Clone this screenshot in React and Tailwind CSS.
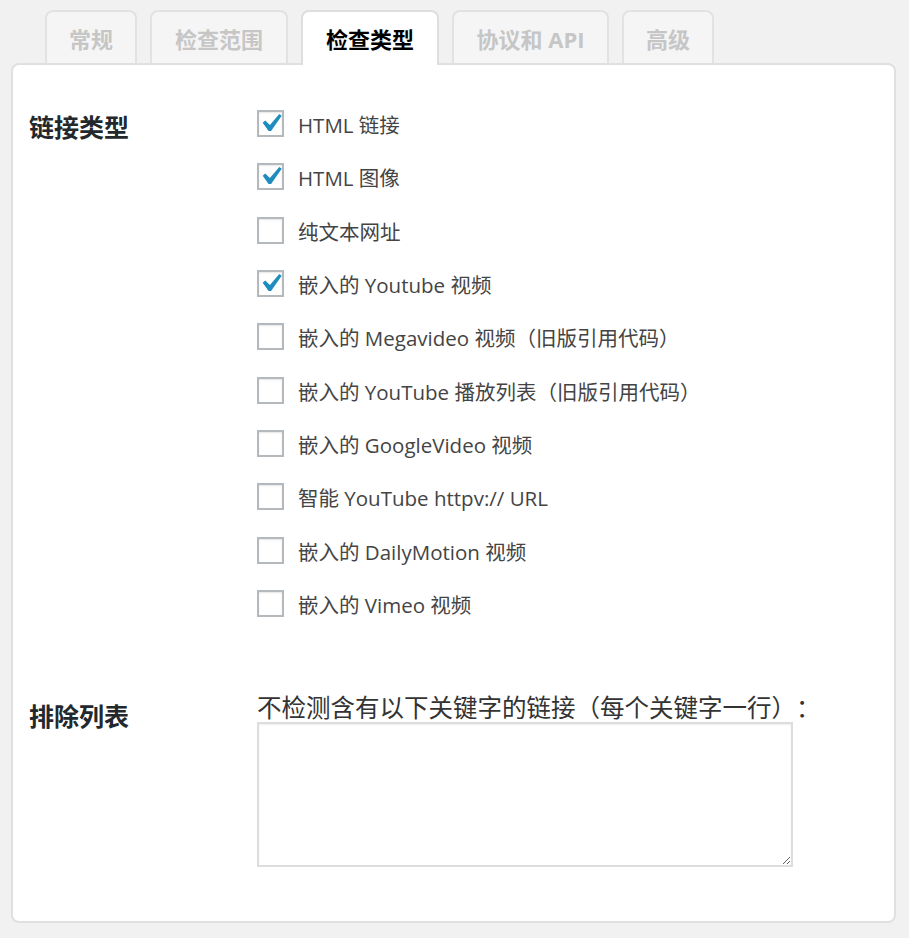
import React from 'react';

const tabs = [
  { label: '常规', w: 'w-[92px]' },
  { label: '检查范围', w: 'w-[138px]' },
  { label: '检查类型', w: 'w-[138px]', active: true },
  { label: '协议和 API', w: 'w-[157px]' },
  { label: '高级', w: 'w-[92px]' },
];

const linkTypes = [
  { label: 'HTML 链接', checked: true },
  { label: 'HTML 图像', checked: true },
  { label: '纯文本网址', checked: false },
  { label: '嵌入的 Youtube 视频', checked: true },
  { label: '嵌入的 Megavideo 视频（旧版引用代码）', checked: false },
  { label: '嵌入的 YouTube 播放列表（旧版引用代码）', checked: false },
  { label: '嵌入的 GoogleVideo 视频', checked: false },
  { label: '智能 YouTube httpv:// URL', checked: false },
  { label: '嵌入的 DailyMotion 视频', checked: false },
  { label: '嵌入的 Vimeo 视频', checked: false },
];

const font = { fontFamily: '"Open Sans", "Noto Sans CJK SC", sans-serif' };

const Checkbox = ({ checked }) => (
  <span className="relative block w-[27px] h-[27px] shrink-0 border-2 border-[#b4b9be] bg-white shadow-[inset_0_1px_2px_rgba(0,0,0,0.1)]">
    {checked && (
      <svg viewBox="0 0 27 27" className="absolute left-[-2px] top-[-2px] w-[27px] h-[27px]">
        <polygon
          points="22.3,4 24.7,5.7 14.1,21.1 11.6,21.1 5.7,12.8 8.2,10.5 12.9,14.9"
          fill="#1e8cbe"
        />
      </svg>
    )}
  </span>
);

const App = () => {
  return (
    <div className="min-h-[938px] bg-[#f1f1f1] pl-[11px] pr-[13px] pt-[10px] [text-spacing-trim:space-all]" style={font}>
      {/* Tabs */}
      <div className="flex items-end h-[53px] pl-[34px] gap-[13px]">
        {tabs.map(tab =>
          tab.active ? (
            <div
              key={tab.label}
              className={`${tab.w} relative z-10 h-[55px] -mb-[2px] flex items-start justify-center pt-[13px] bg-white border-2 border-b-0 border-[#dedede] rounded-t-[8px] text-[22px] font-bold text-black leading-[28px]`}
            >
              {tab.label}
            </div>
          ) : (
            <div
              key={tab.label}
              className={`${tab.w} h-[53px] flex items-start justify-center pt-[13px] bg-[#f5f5f5] border-2 border-b-0 border-[#e2e2e2] rounded-t-[8px] text-[22px] font-bold text-[#c6c6c6] leading-[28px]`}
            >
              {tab.label}
            </div>
          )
        )}
      </div>

      {/* Panel */}
      <div className="h-[860px] bg-white border-2 border-[#e0e0e0] rounded-[8px] pl-[16px] pt-[32px]">
        {/* Link types */}
        <div className="flex">
          <div className="w-[228px] mt-[14px] text-[25px] font-bold text-[#23282d] leading-[32px]">链接类型</div>
          <div className="flex flex-col">
            {linkTypes.map(item => (
              <label key={item.label} className="h-[53.33px] flex items-center gap-[14px]">
                <Checkbox checked={item.checked} />
                <span className="pt-[3px] text-[20.5px] text-[#444] leading-[28px] whitespace-nowrap">{item.label}</span>
              </label>
            ))}
          </div>
        </div>

        {/* Exclusion list */}
        <div className="flex mt-[64px]">
          <div className="w-[228px] mt-[6px] text-[25px] font-bold text-[#23282d] leading-[32px]">排除列表</div>
          <div className="flex flex-col">
            <div className="text-[24.5px] text-[#333] leading-[28px] whitespace-nowrap">
              不检测含有以下关键字的链接（每个关键字一行）：
            </div>
            <textarea className="w-[536px] h-[145px] border-2 border-[#dddddd] bg-white shadow-[inset_0_1px_2px_rgba(0,0,0,0.07)] outline-none" />
          </div>
        </div>
      </div>
    </div>
  );
};

export default App;
